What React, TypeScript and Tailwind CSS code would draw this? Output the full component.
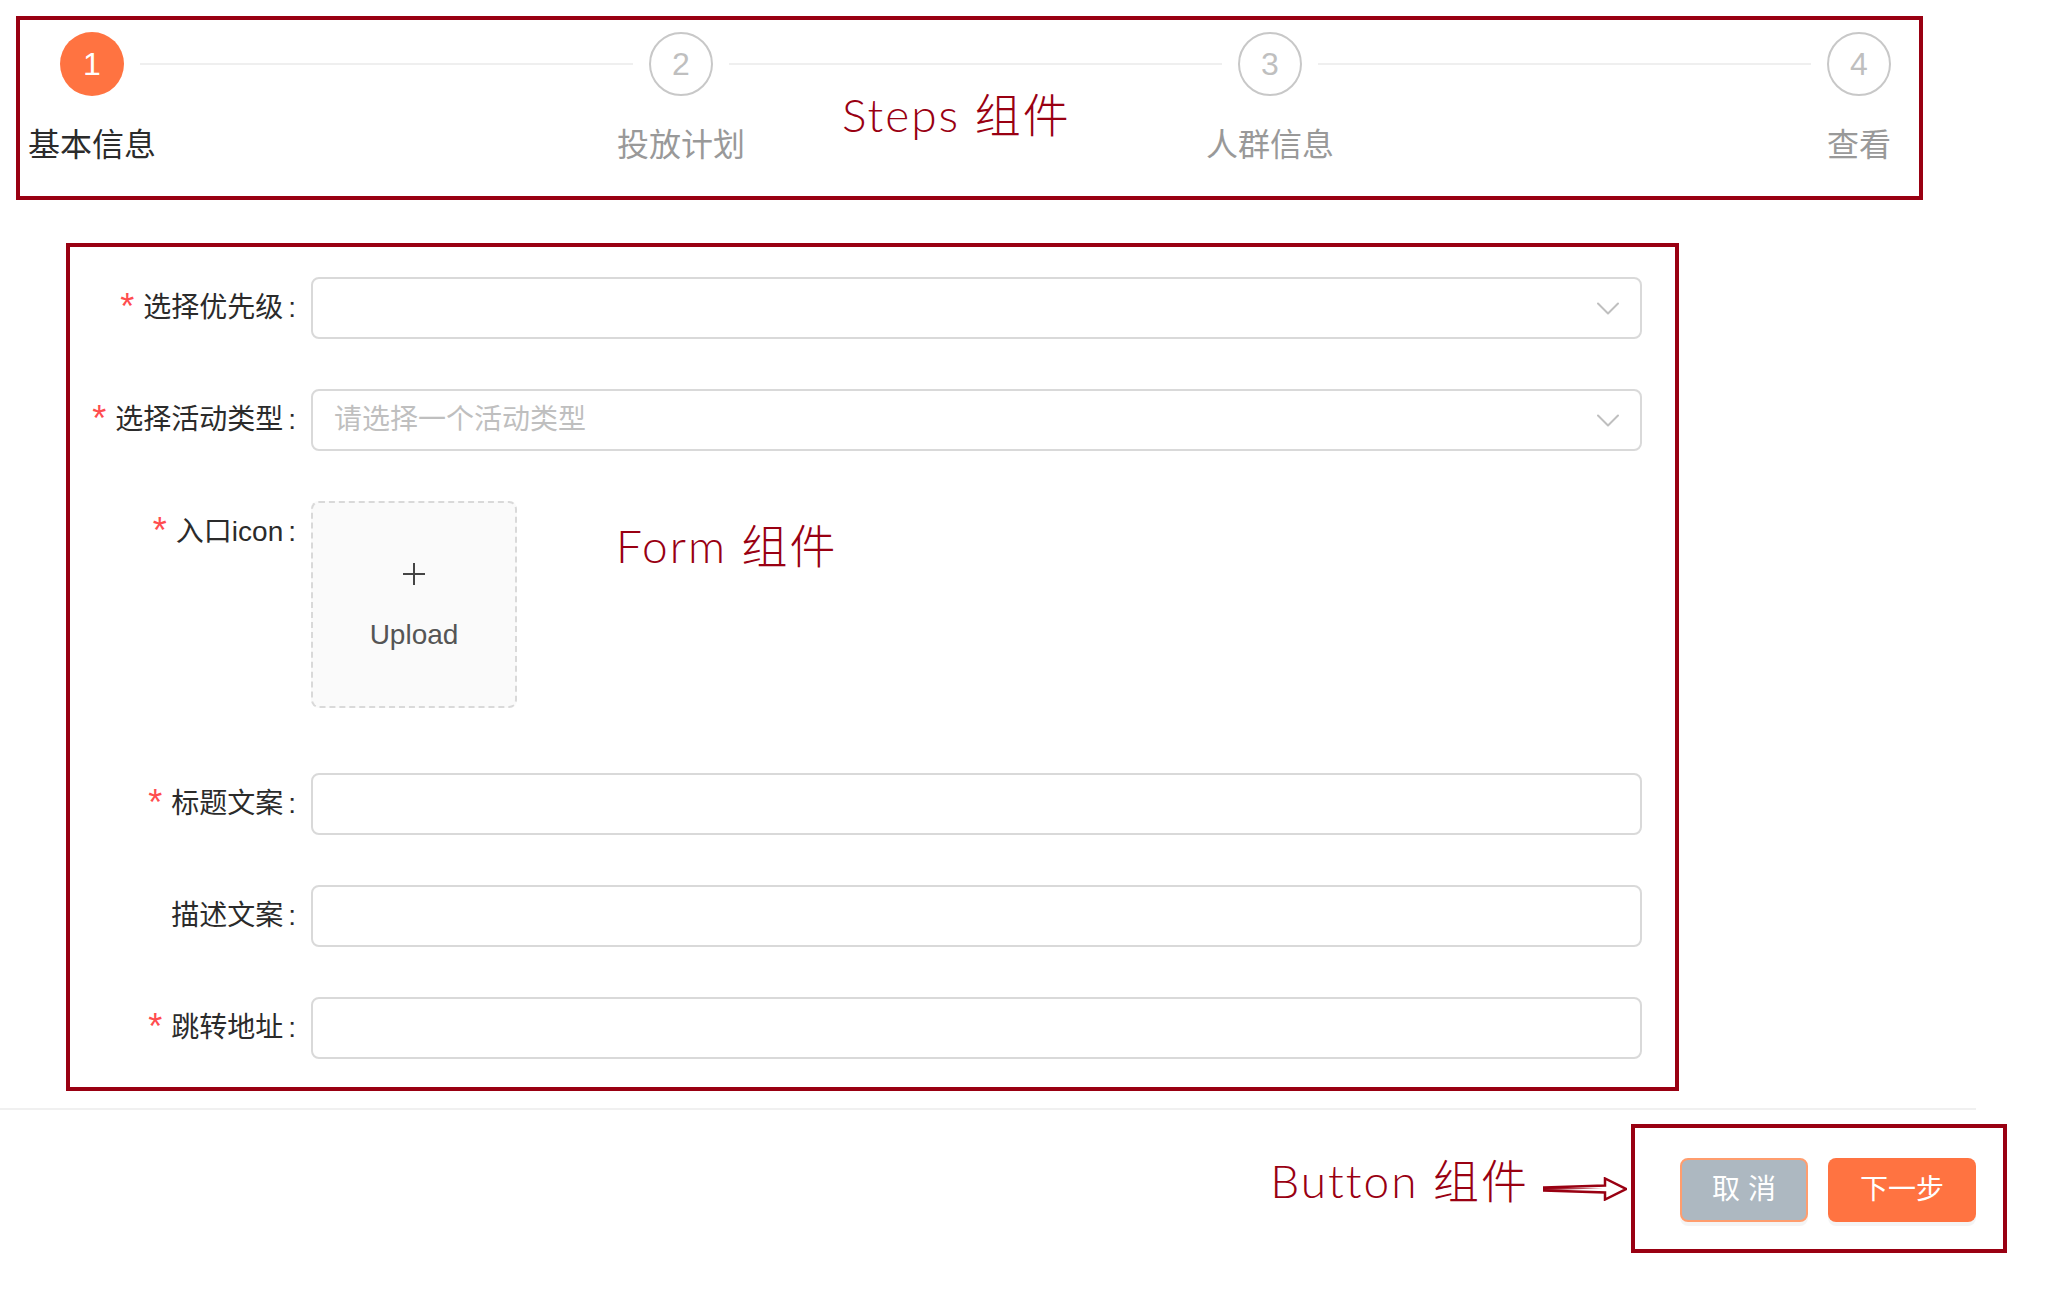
import React from "react";

const RED = "text-[#990012]";

function Chevron() {
  return (
    <svg width="22" height="13" viewBox="0 0 22 13" fill="none">
      <path d="M1 1.5 L11 11.5 L21 1.5" stroke="#bfbfbf" strokeWidth="2" strokeLinecap="round" strokeLinejoin="round" />
    </svg>
  );
}

function StepCircle({ n, active }: { n: number; active?: boolean }) {
  return active ? (
    <div className="flex h-16 w-16 shrink-0 items-center justify-center rounded-full bg-[#ff7341] text-[32px] leading-none text-white">
      {n}
    </div>
  ) : (
    <div className="flex h-16 w-16 shrink-0 items-center justify-center rounded-full border-2 border-[#c8c8c8] text-[32px] leading-none text-[#bfbfbf]">
      {n}
    </div>
  );
}

function Line() {
  return <div className="mx-4 h-[2px] flex-1 bg-[#efefef]" />;
}

function Label({ text, required }: { text: string; required?: boolean }) {
  return (
    <div className="flex h-[62px] w-[226px] shrink-0 items-center justify-end text-[28px] text-[#2b2b2b]">
      {required && <span className="mr-[9px] mt-[-2px] text-[36px] leading-none text-[#ff4d4f]">*</span>}
      <span>{text}</span>
      <span className="ml-[5px]">:</span>
    </div>
  );
}

function Input({ placeholder, select }: { placeholder?: string; select?: boolean }) {
  return (
    <div className="ml-[15px] flex h-[62px] flex-1 items-center justify-between rounded-[8px] border-2 border-[#d9d9d9] bg-white pl-[21px] pr-[21px]">
      <span className="text-[28px] text-[#bfbfbf]">{placeholder ?? ""}</span>
      {select && <Chevron />}
    </div>
  );
}

function Row({ label, required, placeholder, select, last }: { label: string; required?: boolean; placeholder?: string; select?: boolean; last?: boolean }) {
  return (
    <div className={"flex items-center " + (last ? "" : "mb-[50px]")}>
      <Label text={label} required={required} />
      <Input placeholder={placeholder} select={select} />
    </div>
  );
}

function ArrowIcon() {
  return (
    <svg width="84" height="24" viewBox="0 0 84 24" fill="none">
      <path d="M1 10.5 L62 8.5 L62 1.5 L83 12 L62 22.5 L62 15.5 L1 13.5 Z" stroke="#990012" strokeWidth="2.5" strokeLinejoin="miter" fill="white" />
      <path d="M1 11 L60 11.5 L1 13 Z" fill="#990012" />
    </svg>
  );
}

export default function App() {
  const font = { fontFamily: '"Liberation Sans", "Noto Sans CJK SC", sans-serif' };
  const annoFont = { fontFamily: 'Lato, "Noto Sans CJK SC", sans-serif' };
  return (
    <div className="flex h-[1294px] w-[2064px] flex-col overflow-hidden bg-white" style={font}>
      {/* Steps */}
      <div className="relative ml-[16px] mt-[16px] h-[184px] w-[1907px] border-4 border-[#990012]">
        <div className="pl-[40px] pr-[28px] pt-[12px]">
          <div className="flex h-16 items-center">
            <StepCircle n={1} active />
            <Line />
            <StepCircle n={2} />
            <Line />
            <StepCircle n={3} />
            <Line />
            <StepCircle n={4} />
          </div>
          <div className="mt-[27px] flex justify-between">
            {[
              ["基本信息", true],
              ["投放计划", false],
              ["人群信息", false],
              ["查看", false],
            ].map(([t, a]) => (
              <div key={t as string} className="flex w-16 justify-center">
                <span className={"whitespace-nowrap text-[32px] leading-[44px] " + (a ? "text-[#2b2b2b]" : "text-[#999999]")}>{t}</span>
              </div>
            ))}
          </div>
        </div>
        <div className={"absolute left-[822px] top-[72px] whitespace-nowrap text-[46px] font-light leading-[46px] tracking-[2px] " + RED} style={annoFont}>
          Steps 组件
        </div>
      </div>

      {/* Form */}
      <div className="ml-[66px] mt-[43px] w-[1613px] border-4 border-[#990012] pb-[28px] pr-[33px] pt-[30px]">
        <Row label="选择优先级" required select />
        <Row label="选择活动类型" required select placeholder="请选择一个活动类型" />
        <div className="mb-[65px] flex items-start">
          <Label text="入口icon" required />
          <div className="ml-[15px] flex h-[207px] w-[206px] shrink-0 flex-col items-center justify-center rounded-[8px] border-2 border-dashed border-[#d9d9d9] bg-[#fafafa]">
            <svg width="22" height="22" viewBox="0 0 22 22" className="mt-[4px]">
              <path d="M11 0 V22 M0 11 H22" stroke="#444444" strokeWidth="2" />
            </svg>
            <span className="mt-[34px] text-[28px] leading-[32px] text-[#555555]">Upload</span>
          </div>
          <div className={"ml-[99px] mt-[22px] whitespace-nowrap text-[46px] font-light leading-[46px] tracking-[2px] " + RED} style={annoFont}>
            Form 组件
          </div>
        </div>
        <Row label="标题文案" required />
        <Row label="描述文案" />
        <Row label="跳转地址" required last />
      </div>

      {/* Divider */}
      <div className="mt-[17px] h-[2px] w-[1976px] bg-[#f0f0f0]" />

      {/* Footer */}
      <div className="mt-[14px] flex items-center justify-end pr-[57px]">
        <div className={"mb-[16px] whitespace-nowrap text-[46px] font-light leading-[46px] tracking-[2px] " + RED} style={annoFont}>
          Button 组件
        </div>
        <div className="ml-[14px] mr-[4px] flex items-center">
          <ArrowIcon />
        </div>
        <div className="flex h-[129px] w-[376px] items-start border-4 border-[#990012] pl-[45px] pt-[30px]">
          <button className="flex h-[64px] w-[128px] items-center justify-center rounded-[8px] border-2 border-[#ff9d6e] bg-[#adb8c1] text-[28px] text-white shadow-[0_4px_0_rgba(0,0,0,0.045)]">
            取 消
          </button>
          <button className="ml-[20px] flex h-[64px] w-[148px] items-center justify-center rounded-[8px] bg-[#ff7341] text-[28px] text-white shadow-[0_4px_0_rgba(0,0,0,0.045)]">
            下一步
          </button>
        </div>
      </div>
    </div>
  );
}
